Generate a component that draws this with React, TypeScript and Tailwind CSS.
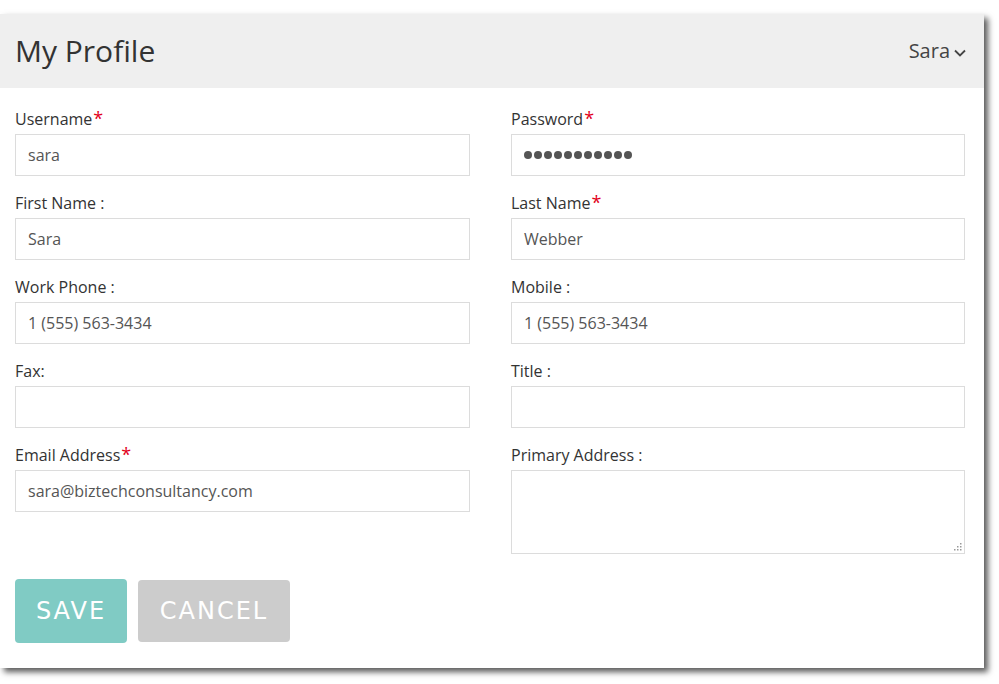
import React from "react";

const font = { fontFamily: '"Open Sans", "Noto Sans", sans-serif' };

function Label({ text, req, colon }: { text: string; req?: boolean; colon?: boolean }) {
  return (
    <div className="h-[22px] mb-[4px] text-[16px] leading-[22px] text-[#333]">
      {text}
      {colon ? " :" : ""}
      {req && <span className="text-[#e2001a] text-[18px] leading-none ml-[1px]">*</span>}
    </div>
  );
}

function Field({
  label,
  req,
  colon,
  value,
  password,
}: {
  label: string;
  req?: boolean;
  colon?: boolean;
  value?: string;
  password?: boolean;
}) {
  return (
    <div className="mb-[16px]">
      <Label text={label} req={req} colon={colon} />
      <div className="h-[42px] border border-[#dcdcdc] bg-white flex items-center px-[12px] text-[16px] text-[#555]">
        {password ? (
          <span className="flex gap-[2px]">
            {Array.from({ length: 11 }).map((_, i) => (
              <span key={i} className="w-[8px] h-[8px] rounded-full bg-[#555] inline-block" />
            ))}
          </span>
        ) : (
          value
        )}
      </div>
    </div>
  );
}

export default function App() {
  return (
    <div className="w-[999px] h-[684px] bg-white pt-[14px]" style={font}>
      <div className="w-[984px] h-[654px] bg-white shadow-[4px_4px_6px_rgba(0,0,0,0.65)]">
        <div className="h-[74px] bg-[#efefef] flex items-center justify-between pl-[15px] pr-[17px]">
          <div className="text-[30px] text-[#333] leading-none">My Profile</div>
          <div className="flex items-center text-[20px] text-[#444] gap-[3px]">
            <span>Sara</span>
            <svg width="14" height="14" viewBox="0 0 14 14" className="mt-[3px]">
              <path d="M2 4.5 L7 9.5 L12 4.5" fill="none" stroke="#444" strokeWidth="1.8" />
            </svg>
          </div>
        </div>
        <div className="pl-[15px] pt-[20px] grid grid-cols-[455px_454px] gap-x-[41px]">
          <div>
            <Field label="Username" req value="sara" />
            <Field label="First Name" colon value="Sara" />
            <Field label="Work Phone" colon value="1 (555) 563-3434" />
            <Field label="Fax:" value="" />
            <Field label="Email Address" req value="sara@biztechconsultancy.com" />
          </div>
          <div>
            <Field label="Password" req password />
            <Field label="Last Name" req value="Webber" />
            <Field label="Mobile" colon value="1 (555) 563-3434" />
            <Field label="Title" colon value="" />
            <div>
              <Label text="Primary Address" colon />
              <div className="relative h-[84px] border border-[#dcdcdc] bg-white">
                <svg width="8" height="8" viewBox="0 0 8 8" className="absolute right-[2px] bottom-[2px]">
                  <rect x="6" y="0" width="1.5" height="1.5" fill="#999" />
                  <rect x="3" y="3" width="1.5" height="1.5" fill="#999" />
                  <rect x="6" y="3" width="1.5" height="1.5" fill="#999" />
                  <rect x="0" y="6" width="1.5" height="1.5" fill="#999" />
                  <rect x="3" y="6" width="1.5" height="1.5" fill="#999" />
                  <rect x="6" y="6" width="1.5" height="1.5" fill="#999" />
                </svg>
              </div>
            </div>
          </div>
        </div>
        <div className="pl-[15px] mt-[25px] flex items-center gap-[11px]">
          <button
            className="w-[112px] h-[64px] rounded-[4px] bg-[#80cbc4] text-white text-[24px] font-normal tracking-[2px]"
            style={{ fontFamily: '"DejaVu Sans", "Open Sans", sans-serif' }}
          >
            SAVE
          </button>
          <button
            className="w-[152px] h-[62px] rounded-[4px] bg-[#cccccc] text-white text-[24px] font-normal tracking-[2px]"
            style={{ fontFamily: '"DejaVu Sans", "Open Sans", sans-serif' }}
          >
            CANCEL
          </button>
        </div>
      </div>
    </div>
  );
}
